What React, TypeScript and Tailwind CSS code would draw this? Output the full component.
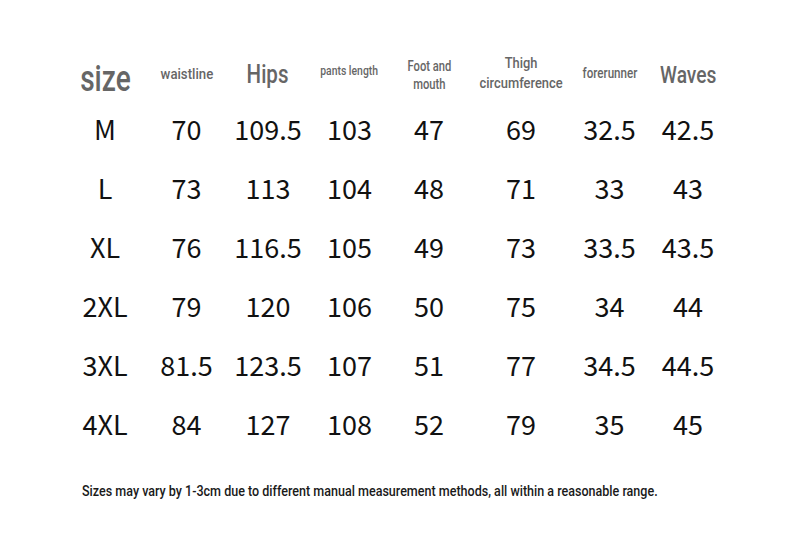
const headFont = '[font-family:Roboto,"Liberation_Sans",sans-serif]';

const rows: string[][] = [
  ['M', '70', '109.5', '103', '47', '69', '32.5', '42.5'],
  ['L', '73', '113', '104', '48', '71', '33', '43'],
  ['XL', '76', '116.5', '105', '49', '73', '33.5', '43.5'],
  ['2XL', '79', '120', '106', '50', '75', '34', '44'],
  ['3XL', '81.5', '123.5', '107', '51', '77', '34.5', '44.5'],
  ['4XL', '84', '127', '108', '52', '79', '35', '45'],
];

const cols = 'grid grid-cols-[82px_81px_82px_81px_78px_106px_71px_86px]';

export default function App() {
  return (
    <div className="w-[793px] h-[556px] bg-white pl-[64px] pt-[50px]">
      <div className={`${cols} h-[50px] items-center text-center text-[#666] font-medium whitespace-nowrap ${headFont}`}>
        <div className="text-[36px] leading-none mt-[8px]">
          <span className="inline-block scale-x-[0.78]">size</span>
        </div>
        <div className="text-[15px] leading-[18px] -mt-[3px]">
          <span className="inline-block scale-x-[0.88]">waistline</span>
        </div>
        <div className="text-[25px] leading-none -mt-[2px]">
          <span className="inline-block scale-x-[0.82]">Hips</span>
        </div>
        <div className="text-[13px] leading-[18px] -mt-[9px]">
          <span className="inline-block scale-x-[0.8]">pants length</span>
        </div>
        <div className="text-[14px] leading-[18px] mt-0">
          <span className="inline-block scale-x-[0.8]">Foot and<br />mouth</span>
        </div>
        <div className="text-[14px] leading-[20px] -mt-[4px]">
          <span className="inline-block scale-x-[0.92]">Thigh<br />circumference</span>
        </div>
        <div className="text-[14px] leading-[18px] -mt-[5px]">
          <span className="inline-block scale-x-[0.83]">forerunner</span>
        </div>
        <div className="text-[24px] leading-none">
          <span className="inline-block scale-x-[0.8]">Waves</span>
        </div>
      </div>
      {rows.map((r) => (
        <div key={r[0]} className={`${cols} h-[59px] items-center text-center text-[#111] text-[27px] [font-family:"Noto_Sans_CJK_SC",sans-serif]`}>
          {r.map((v, i) => (
            <div key={i}>{v}</div>
          ))}
        </div>
      ))}
      <p className={`mt-[27px] ml-[18px] text-[15px] leading-[20px] font-medium text-[#1a1a1a] whitespace-nowrap origin-left scale-x-[0.836] ${headFont}`}>
        Sizes may vary by 1-3cm due to different manual measurement methods, all within a reasonable range.
      </p>
    </div>
  );
}
